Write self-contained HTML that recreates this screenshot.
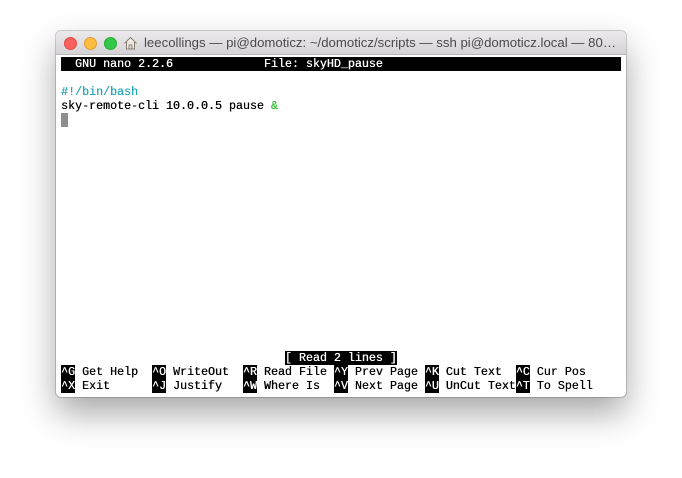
<!DOCTYPE html>
<html><head><style>
body{margin:0;width:682px;height:478px;background:#fff;position:relative;overflow:hidden}
.win{position:absolute;left:56px;top:31px;width:570px;height:366px;border-radius:5px;background:#fff;box-shadow:0 0 0 1px rgba(0,0,0,.18),0 16px 34px rgba(0,0,0,.35);overflow:hidden}
.tb{position:absolute;left:0;top:0;width:570px;height:23px;background:linear-gradient(#ebe9eb,#d5d3d5);border-bottom:1px solid #b8b6b8}
.dot{position:absolute;top:6px;width:11px;height:11px;border-radius:50%}
.title{position:absolute;left:88px;top:4px;font:13.2px "Liberation Sans",sans-serif;color:#4a4a4a;white-space:nowrap}
.t{position:absolute;left:5px;font:11.67px/14px "Liberation Mono",monospace;white-space:pre;color:#000;text-shadow:0.3px 0 0 currentColor}
.inv{background:#000;color:#fff}
</style></head><body>
<div class="win">
<div class="tb">
<div class="dot" style="left:8px;background:#fc605c;border:0.5px solid #de4a44"></div>
<div class="dot" style="left:28px;background:#fdbc40;border:0.5px solid #de9f34"></div>
<div class="dot" style="left:48px;background:#34c84a;border:0.5px solid #27aa35"></div>
<svg style="position:absolute;left:67px;top:5px" width="15" height="14" viewBox="0 0 15 14"><path d="M1.5 7.5L7.5 1.5L13.5 7.5M3.5 6v7h8V6M6 13V9h3v4" fill="#f4f0e8" stroke="#8a8070" stroke-width="1"/></svg>
<div class="title">leecollings — pi@domoticz: ~/domoticz/scripts — ssh pi@domoticz.local — 80…</div>
</div>
<div class="t inv" style="top:26px;width:560px">  GNU nano 2.2.6             File: skyHD_pause                                   </div>
<div class="t" style="top:54px;color:#27a8b8">#!/bin/bash</div>
<div class="t" style="top:68px">sky-remote-cli 10.0.0.5 pause <span style="color:#33c033">&amp;</span></div>
<div style="position:absolute;left:5px;top:82px;width:7px;height:14px;background:#8e8e8e"></div>
<div class="t" style="top:320px">                                <span class="inv">[ Read 2 lines ]</span></div>
<div class="t" style="top:334px"><span class="inv">^G</span> Get Help  <span class="inv">^O</span> WriteOut  <span class="inv">^R</span> Read File <span class="inv">^Y</span> Prev Page <span class="inv">^K</span> Cut Text  <span class="inv">^C</span> Cur Pos</div>
<div class="t" style="top:348px"><span class="inv">^X</span> Exit      <span class="inv">^J</span> Justify   <span class="inv">^W</span> Where Is  <span class="inv">^V</span> Next Page <span class="inv">^U</span> UnCut Text<span class="inv">^T</span> To Spell</div>
</div>
</body></html>
